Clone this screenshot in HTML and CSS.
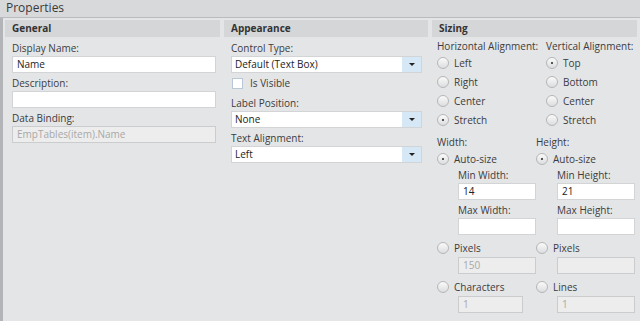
FILE: index.html
```html
<!DOCTYPE html>
<html>
<head>
    <title>Properties</title>
    <link rel="stylesheet" href="styles.css">
</head>
<body>
    <div class="window">
        <div class="titlebar">Properties</div>
        <div class="panel">
            <section class="group">
                <h2>General</h2>
                <div class="group-body">
                    <label class="field-label">Display Name:</label>
                    <div class="textbox">Name</div>
                    <label class="field-label">Description:</label>
                    <div class="textbox"></div>
                    <label class="field-label">Data Binding:</label>
                    <div class="textbox disabled">EmpTables(item).Name</div>
                </div>
            </section>

            <section class="group">
                <h2>Appearance</h2>
                <div class="group-body">
                    <label class="field-label">Control Type:</label>
                    <div class="dropdown"><span>Default (Text Box)</span><span class="arrow"></span></div>
                    <div class="check-row"><span class="checkbox"></span>Is Visible</div>
                    <label class="field-label">Label Position:</label>
                    <div class="dropdown"><span>None</span><span class="arrow"></span></div>
                    <label class="field-label">Text Alignment:</label>
                    <div class="dropdown"><span>Left</span><span class="arrow"></span></div>
                </div>
            </section>

            <section class="group">
                <h2>Sizing</h2>
                <div class="group-body sizing">
                    <div class="align-grid">
                        <div class="align-col">
                            <div class="small-label">Horizontal Alignment:</div>
                            <div class="radio-row"><span class="radio"></span>Left</div>
                            <div class="radio-row"><span class="radio"></span>Right</div>
                            <div class="radio-row"><span class="radio"></span>Center</div>
                            <div class="radio-row"><span class="radio checked"></span>Stretch</div>
                        </div>
                        <div class="align-col">
                            <div class="small-label">Vertical Alignment:</div>
                            <div class="radio-row"><span class="radio checked"></span>Top</div>
                            <div class="radio-row"><span class="radio"></span>Bottom</div>
                            <div class="radio-row"><span class="radio"></span>Center</div>
                            <div class="radio-row"><span class="radio"></span>Stretch</div>
                        </div>
                    </div>
                    <div class="size-grid">
                        <div class="size-col">
                            <div class="small-label">Width:</div>
                            <div class="radio-row"><span class="radio checked"></span>Auto-size</div>
                            <div class="sub">
                                <div class="small-label">Min Width:</div>
                                <div class="textbox small">14</div>
                                <div class="small-label">Max Width:</div>
                                <div class="textbox small"></div>
                            </div>
                            <div class="radio-row spaced"><span class="radio"></span>Pixels</div>
                            <div class="sub"><div class="textbox small disabled">150</div></div>
                            <div class="radio-row spaced"><span class="radio"></span>Characters</div>
                            <div class="sub"><div class="textbox small narrow disabled">1</div></div>
                        </div>
                        <div class="size-col">
                            <div class="small-label">Height:</div>
                            <div class="radio-row"><span class="radio checked"></span>Auto-size</div>
                            <div class="sub">
                                <div class="small-label">Min Height:</div>
                                <div class="textbox small">21</div>
                                <div class="small-label">Max Height:</div>
                                <div class="textbox small"></div>
                            </div>
                            <div class="radio-row spaced"><span class="radio"></span>Pixels</div>
                            <div class="sub"><div class="textbox small disabled"></div></div>
                            <div class="radio-row spaced"><span class="radio"></span>Lines</div>
                            <div class="sub"><div class="textbox small disabled">1</div></div>
                        </div>
                    </div>
                </div>
            </section>
        </div>
    </div>
</body>
</html>
```

FILE: styles.css
```css
body {
    margin: 0;
    font-family: 'Open Sans', 'DejaVu Sans', sans-serif;
    font-size: 10px;
    color: #3c3c3c;
    background-color: #e4e5e7;
}
.window {
    width: 640px;
    height: 321px;
    overflow: hidden;
    background-color: #e4e5e7;
}
.titlebar {
    height: 17px;
    line-height: 16px;
    padding-left: 6px;
    font-size: 12px;
    color: #3a3a3a;
    background-color: #d8d9db;
    border-bottom: 1px solid #b9bbbe;
}
.panel {
    display: grid;
    grid-template-columns: 215px 204px 205px;
    column-gap: 4px;
    padding: 2px 0 0 2px;
    border-left: 3px solid #b2b4b7;
    height: 303px;
}
.group h2 {
    margin: 0;
    height: 17px;
    line-height: 17px;
    padding-left: 7px;
    font-size: 10px;
    font-weight: bold;
    color: #333;
    background-color: #d5d6d8;
}
.group-body {
    padding: 1px 4px 0 7px;
}
.field-label {
    display: block;
    margin-top: 2px;
    line-height: 16px;
}
.textbox {
    box-sizing: border-box;
    height: 17px;
    line-height: 15px;
    padding-left: 4px;
    color: #222;
    background-color: #fff;
    border: 1px solid #d3d4d6;
}
.textbox.disabled {
    color: #a8a8a8;
    background-color: #ededed;
    border-color: #cbcccd;
}
.dropdown {
    box-sizing: border-box;
    display: flex;
    height: 17px;
    line-height: 15px;
    color: #222;
    background-color: #fff;
    border: 1px solid #d3d4d6;
    margin-right: 2px;
}
.dropdown span:first-child {
    flex: 1;
    padding-left: 3px;
}
.dropdown .arrow {
    width: 19px;
    background-color: #d6e8f5;
    position: relative;
}
.dropdown .arrow::after {
    content: "";
    position: absolute;
    left: 7px;
    top: 6px;
    border-left: 3px solid transparent;
    border-right: 3px solid transparent;
    border-top: 3px solid #222;
}
.check-row {
    display: flex;
    align-items: center;
    height: 20px;
    padding-left: 1px;
}
.checkbox {
    box-sizing: border-box;
    width: 11px;
    height: 11px;
    margin-right: 7px;
    background-color: #fff;
    border: 1px solid #b9c7d6;
}
.sizing {
    padding: 1px 0 0 5px;
    white-space: nowrap;
}
.align-grid {
    display: grid;
    grid-template-columns: 109px auto;
}
.small-label {
    line-height: 14px;
    margin-top: 1px;
}
.radio-row {
    display: flex;
    align-items: center;
    height: 19px;
}
.radio-row.spaced {
    margin-top: 1px;
}
.radio {
    box-sizing: border-box;
    width: 12px;
    height: 12px;
    margin-right: 5px;
    border-radius: 50%;
    border: 1px solid #b5b6b8;
    background: linear-gradient(#fafafa, #dcdddf);
    position: relative;
}
.radio.checked::after {
    content: "";
    position: absolute;
    left: 4px;
    top: 4px;
    width: 2px;
    height: 2px;
    border-radius: 50%;
    background-color: #222;
}
.size-grid {
    display: grid;
    grid-template-columns: 99px auto;
    margin-top: 5px;
}
.sub {
    padding-left: 21px;
}
.sub .small-label {
    margin-top: 0;
    line-height: 15px;
}
.textbox.small {
    width: 78px;
    margin-bottom: 3px;
}
.textbox.small.narrow {
    width: 65px;
}
```
